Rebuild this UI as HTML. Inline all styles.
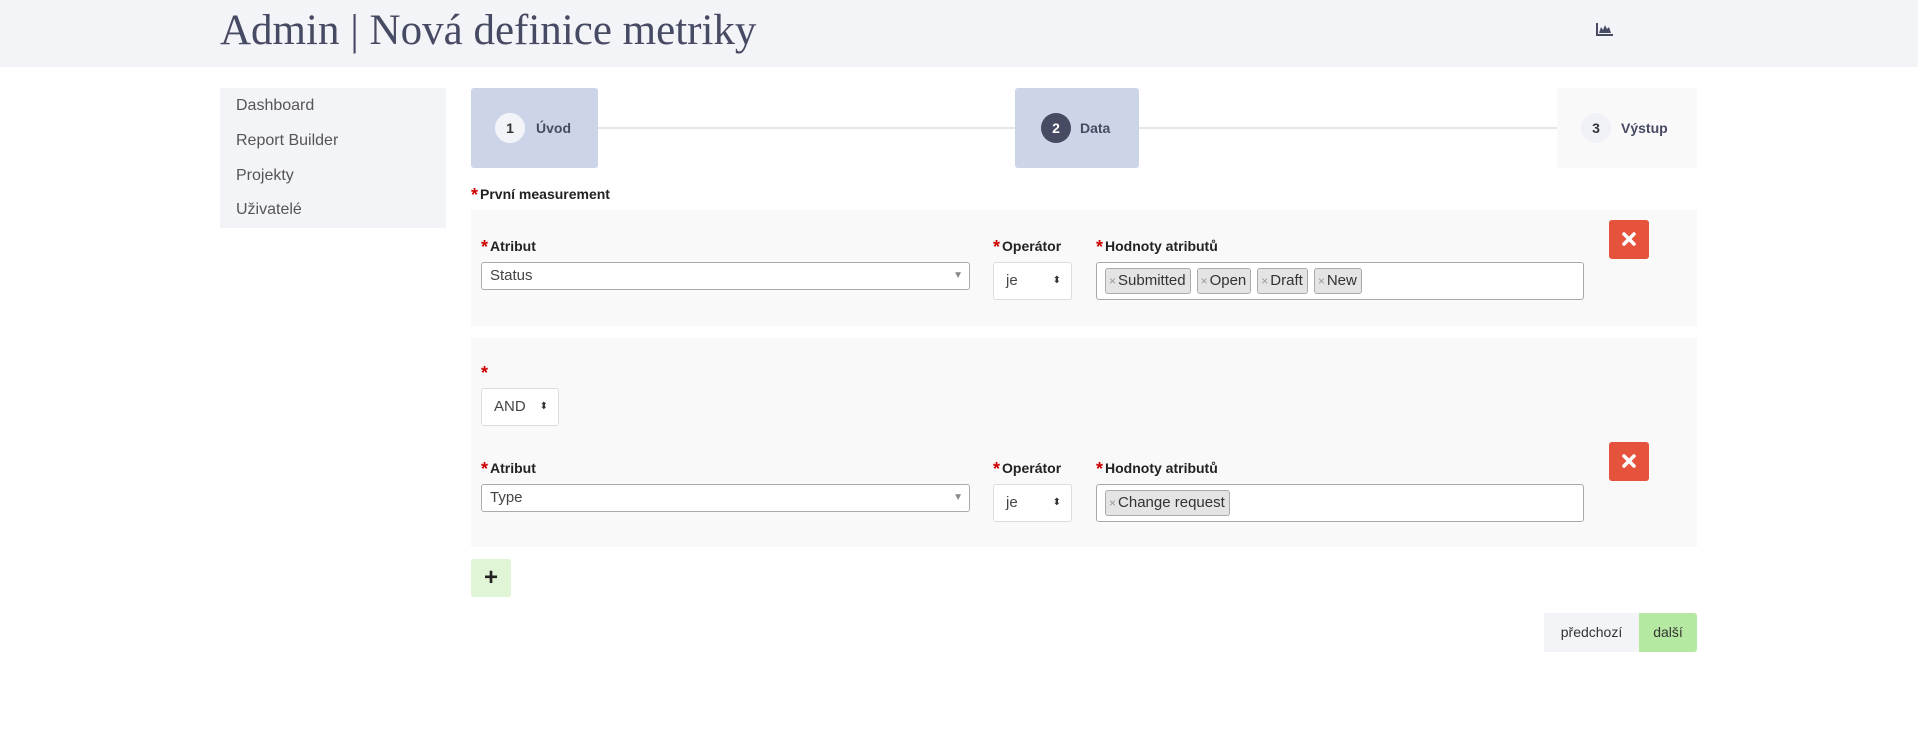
<!DOCTYPE html>
<html><head><meta charset="utf-8"><style>
*{box-sizing:border-box;margin:0;padding:0}
body{width:1918px;height:754px;background:#fff;font-family:"Liberation Sans",sans-serif;position:relative;overflow:hidden;color:#333}
.a{position:absolute}
.hdr{left:0;top:0;width:1918px;height:67px;background:#f3f4f8}
.title{left:220px;top:6px;font-family:"Liberation Serif",serif;font-size:43px;color:#474a63;white-space:nowrap}
.side{left:220px;top:88px;width:226px;height:140px;background:#f3f4f8}
.side div{position:absolute;left:16px;font-size:16px;color:#555}
.step{top:88px;height:80px;border-radius:3px}
.circ{width:30px;height:30px;border-radius:50%;text-align:center;line-height:30px;font-weight:bold;font-size:14px}
.stxt{font-weight:bold;font-size:14px;color:#474a63}
.panel{left:471px;width:1226px;background:#f9f9f9}
.lbl{font-weight:bold;font-size:14px;color:#222;white-space:nowrap}
.lbl b{color:#c00;font-size:18px;margin-right:2px;vertical-align:-2px}
.sel{background:#fff;border:1px solid #aaa;border-radius:3px;font-size:15px;color:#444;padding-left:8px}
.ops{background:#fff;border:1px solid #ddd;border-radius:3px;font-size:15px;color:#444;padding-left:12px}
.tags{display:flex;gap:6px;padding:5px 0 0 8px}
.tag{background:#e4e4e4;border:1px solid #aaa;border-radius:3px;font-size:15px;color:#333;height:26px;line-height:24px;padding:0 4px 0 3px;white-space:nowrap}
.tag i{font-style:normal;color:#999;font-size:12px;margin-right:2px}
.del{width:40px;height:39px;background:#e5533d;border-radius:3px}
.del svg{position:absolute;left:13px;top:12px}
.arr{font-size:10px;color:#333}
</style></head><body>
<div class="a hdr"></div>
<div class="a title">Admin | Nová definice metriky</div>
<svg class="a" style="left:1596px;top:23px" width="17" height="13" viewBox="0 0 17 13"><path d="M1 0v12h16" stroke="#474a63" stroke-width="2" fill="none"/><path d="M3 10l2-6 2 3 2-5 2 4 2-2 2 6z" fill="#474a63"/></svg>

<div class="a side">
<div style="top:9px">Dashboard</div>
<div style="top:44px">Report Builder</div>
<div style="top:79px">Projekty</div>
<div style="top:113px">Uživatelé</div>
</div>

<div class="a" style="left:598px;top:127px;width:959px;height:2px;background:#e4e6ec"></div>
<div class="a step" style="left:471px;width:127px;background:#ccd5e8"></div>
<div class="a circ" style="left:495px;top:113px;background:#f3f4f8;color:#333">1</div>
<div class="a stxt" style="left:536px;top:120px">Úvod</div>
<div class="a step" style="left:1015px;width:124px;background:#ccd5e8"></div>
<div class="a circ" style="left:1041px;top:113px;background:#474a63;color:#fff">2</div>
<div class="a stxt" style="left:1080px;top:120px">Data</div>
<div class="a step" style="left:1557px;width:140px;background:#f9f9fa"></div>
<div class="a circ" style="left:1581px;top:113px;background:#f0f2f8;color:#333">3</div>
<div class="a stxt" style="left:1621px;top:120px">Výstup</div>

<div class="a lbl" style="left:471px;top:185px"><b>*</b>První measurement</div>

<div class="a panel" style="top:210px;height:116px"></div>
<div class="a lbl" style="left:481px;top:237px"><b>*</b>Atribut</div>
<div class="a lbl" style="left:993px;top:237px"><b>*</b>Operátor</div>
<div class="a lbl" style="left:1096px;top:237px"><b>*</b>Hodnoty atributů</div>
<div class="a sel" style="left:481px;top:262px;width:489px;height:28px;line-height:26px">Status<span class="a arr" style="right:6px;top:0;color:#888">▼</span></div>
<div class="a ops" style="left:993px;top:262px;width:79px;height:38px;line-height:36px">je<span class="a arr" style="right:10px;top:0">⬍</span></div>
<div class="a sel tags" style="left:1096px;top:262px;width:488px;height:38px"><span class="tag"><i>×</i>Submitted</span><span class="tag"><i>×</i>Open</span><span class="tag"><i>×</i>Draft</span><span class="tag"><i>×</i>New</span></div>
<div class="a del" style="left:1609px;top:220px"><svg width="14" height="14" viewBox="0 0 14 14"><path d="M2 2l10 10M12 2L2 12" stroke="#fff" stroke-width="3.5" stroke-linecap="round"/></svg></div>

<div class="a panel" style="top:338px;height:209px"></div>
<div class="a lbl" style="left:481px;top:363px"><b>*</b></div>
<div class="a ops" style="left:481px;top:388px;width:78px;height:38px;line-height:36px">AND<span class="a arr" style="right:10px;top:0">⬍</span></div>
<div class="a lbl" style="left:481px;top:459px"><b>*</b>Atribut</div>
<div class="a lbl" style="left:993px;top:459px"><b>*</b>Operátor</div>
<div class="a lbl" style="left:1096px;top:459px"><b>*</b>Hodnoty atributů</div>
<div class="a sel" style="left:481px;top:484px;width:489px;height:28px;line-height:26px">Type<span class="a arr" style="right:6px;top:0;color:#888">▼</span></div>
<div class="a ops" style="left:993px;top:484px;width:79px;height:38px;line-height:36px">je<span class="a arr" style="right:10px;top:0">⬍</span></div>
<div class="a sel tags" style="left:1096px;top:484px;width:488px;height:38px"><span class="tag"><i>×</i>Change request</span></div>
<div class="a del" style="left:1609px;top:442px"><svg width="14" height="14" viewBox="0 0 14 14"><path d="M2 2l10 10M12 2L2 12" stroke="#fff" stroke-width="3.5" stroke-linecap="round"/></svg></div>

<div class="a" style="left:471px;top:559px;width:40px;height:38px;background:#dff5d5;border-radius:3px;text-align:center;line-height:38px;font-size:24px;font-weight:bold;color:#222">+</div>

<div class="a" style="left:1544px;top:613px;width:95px;height:39px;background:#f3f4f8;font-size:14px;line-height:39px;text-align:center;color:#333">předchozí</div>
<div class="a" style="left:1639px;top:613px;width:58px;height:39px;background:#b5e8a0;border-radius:0 3px 3px 0;font-size:14px;line-height:39px;text-align:center;color:#333">další</div>
</body></html>
